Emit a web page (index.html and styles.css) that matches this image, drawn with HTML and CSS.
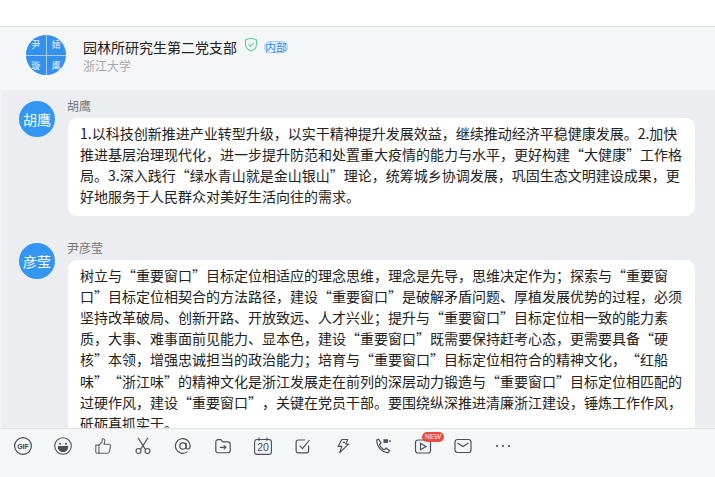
FILE: index.html
```html
<!DOCTYPE html>
<html lang="zh-CN">
<head>
    <meta charset="UTF-8">
    <meta name="viewport" content="width=device-width, initial-scale=1.0">
    <title>园林所研究生第二党支部</title>
    <link rel="stylesheet" href="styles.css">
</head>
<body>
    <div class="topbar"></div>
    <div class="header">
        <div class="group-avatar">
            <span>尹</span><span>婧</span><span>璇</span><span>鹰</span>
        </div>
        <div class="group-info">
            <div class="group-title">
                <span>园林所研究生第二党支部</span>
                <svg class="shield" width="14" height="15" viewBox="0 0 14 15" fill="none" stroke="#5fcf9a" stroke-width="1.1">
                    <path d="M7 1l5.5 2v4.5c0 3-2.5 5.300-5.500 6.500C4 12.800 1.500 10.500 1.500 7.500V3z"/>
                    <path d="M4.500 7.200l2 2 3.200-3.400"/>
                </svg>
                <span class="tag">内部</span>
            </div>
            <div class="group-org">浙江大学</div>
        </div>
    </div>
    <div class="chat">
        <div class="msg">
            <div class="avatar">胡鹰</div>
            <div class="msg-body">
                <div class="name">胡鹰</div>
                <div class="bubble">1.以科技创新推进产业转型升级，以实干精神提升发展效益，继续推动经济平稳健康发展。2.加快推进基层治理现代化，进一步提升防范和处置重大疫情的能力与水平，更好构建“大健康”工作格局。3.深入践行“绿水青山就是金山银山”理论，统筹城乡协调发展，巩固生态文明建设成果，更好地服务于人民群众对美好生活向往的需求。</div>
            </div>
        </div>
        <div class="msg">
            <div class="avatar">彦莹</div>
            <div class="msg-body">
                <div class="name">尹彦莹</div>
                <div class="bubble">树立与“重要窗口”目标定位相适应的理念思维，理念是先导，思维决定作为；探索与“重要窗口”目标定位相契合的方法路径，建设“重要窗口”是破解矛盾问题、厚植发展优势的过程，必须坚持改革破局、创新开路、开放致远、人才兴业；提升与“重要窗口”目标定位相一致的能力素质，大事、难事面前见能力、显本色，建设“重要窗口”既需要保持赶考心态，更需要具备“硬核”本领，增强忠诚担当的政治能力；培育与“重要窗口”目标定位相符合的精神文化，“红船味”“浙江味”的精神文化是浙江发展走在前列的深层动力锻造与“重要窗口”目标定位相匹配的过硬作风，建设“重要窗口”，关键在党员干部。要围绕纵深推进清廉浙江建设，锤炼工作作风，砥砺真抓实干。</div>
            </div>
        </div>
    </div>
    <div class="toolbar">
        <svg width="18" height="18" viewBox="0 0 18 18" fill="none" stroke="#3f444e" stroke-width="1.100"><circle cx="9" cy="9" r="8.400"/><text x="9" y="11.600" class="gif">GIF</text></svg>
        <svg width="18" height="18" viewBox="0 0 18 18" fill="none" stroke="#4a4f5a" stroke-width="1.100"><circle cx="9" cy="9" r="8.300"/><circle cx="6" cy="6.800" r="1" fill="#4a4f5a" stroke="none"/><circle cx="12" cy="6.800" r="1" fill="#4a4f5a" stroke="none"/><path d="M4.300 9.500h9.400c0 3-2.100 5-4.700 5s-4.700-2-4.700-5z" fill="#4a4f5a"/></svg>
        <svg width="18" height="18" viewBox="-1 -1 20 20" fill="none" stroke="#5a5f6a" stroke-width="1.200"><path d="M1 8h3.500v9H2.500A1.500 1.500 0 0 1 1 15.500z"/><path d="M4.500 8l3.500-3.500V2c0-1.500 2.800-1.500 3 .8.100 1.400-.4 2.900-.8 4.200h5.300c1.300 0 2 1 1.800 2.200l-1.100 5.900c-.2 1.100-1 1.900-2.200 1.900H4.500"/></svg>
        <svg width="18" height="18" viewBox="-1 -1 20 20" fill="none" stroke="#4a4f5a" stroke-width="1.200"><path d="M3.500 0l8 12.500M14.500 0l-8 12.500"/><circle cx="4" cy="14.500" r="2.800"/><circle cx="14" cy="14.500" r="2.800"/></svg>
        <svg width="18" height="18" viewBox="-1 -1 20 20" fill="none" stroke="#4a4f5a" stroke-width="1.300"><circle cx="9" cy="9" r="3.500"/><path d="M12.500 5.500v5c0 2.700 4.500 2.700 4.500-1.500a8.200 8.200 0 1 0-3 6.300"/></svg>
        <svg width="18" height="18" viewBox="-1 -1 20 20" fill="none" stroke="#4a4f5a" stroke-width="1.300"><path d="M1 4.500C1 3 2 2 3.500 2h3.200l2 2.500h5.800c1.500 0 2.500 1 2.500 2.500v7c0 1.500-1 2.500-2.500 2.500h-11C2 16.500 1 15.500 1 14z"/><path d="M5.500 10.500h6.500M9.800 8.300l2.400 2.200-2.400 2.200"/></svg>
        <svg width="18" height="18" viewBox="0 0 18 18" fill="none" stroke="#4a4f5a" stroke-width="1.100"><rect x=".6" y="2.500" width="16.800" height="14.900" rx="2.500"/><path d="M5 .5v3.500M13 .5v3.500"/><text x="9" y="14" class="date">20</text></svg>
        <svg width="18" height="18" viewBox="-1.500 -1.500 21 21" fill="none" stroke="#4a4f5a" stroke-width="1.400"><path d="M15.500 8.500v6c0 1.500-1 2.500-2.500 2.500H3.500C2 17 1 16 1 14.500V4.500C1 3 2 2 3.500 2h8"/><path d="M5 8.500l3.500 3.500L16.500 2"/></svg>
        <svg width="18" height="18" viewBox="-2 -1 22 20" fill="none" stroke="#4a4f5a" stroke-width="1.400" stroke-linejoin="round"><path d="M7.500 1H15l-2.800 5.500H16L5 17l2.600-7.500H3z"/><path d="M8.500 4.500h3" /></svg>
        <svg width="18" height="18" viewBox="-1 -1 20 20" fill="none" stroke="#4a4f5a" stroke-width="1.300"><path d="M2 2.500l2.200-1 2.600 4-1.600 1.600c.7 2.600 3 5.100 5.600 6l1.600-1.700 3.800 2.900-1.200 2c-5.800 1-12.800-6-13-13.800z"/><rect x="9.500" y="1.500" width="5" height="4" fill="#4a4f5a" stroke="none"/><path d="M15 3.500l2.500-1.500v3z" fill="#4a4f5a" stroke="none"/></svg>
        <div class="video-btn">
            <svg width="18" height="18" viewBox="0 0 18 18" fill="none" stroke="#4a4f5a" stroke-width="1.200"><rect x="1.500" y="3" width="15" height="13" rx="2.500"/><path d="M6.500 6.300l5.500 3.200-5.500 3.200z"/></svg>
            <span class="badge">NEW</span>
        </div>
        <svg width="18" height="18" viewBox="0 0 18 18" fill="none" stroke="#4a4f5a" stroke-width="1.200"><rect x="1" y="2.500" width="16" height="13" rx="2.500"/><path d="M3.500 6l5.500 3.500L14.500 6"/></svg>
        <svg width="18" height="18" viewBox="0 0 18 18" fill="#4a4f5a"><circle cx="3" cy="9" r="1.100"/><circle cx="9" cy="9" r="1.100"/><circle cx="15" cy="9" r="1.100"/></svg>
    </div>
</body>
</html>
```

FILE: styles.css
```css
body {
    margin: 0;
    display: flex;
    flex-direction: column;
    height: 100vh;
    overflow: hidden;
    font-family: "Noto Sans CJK SC", "Liberation Sans", sans-serif;
    text-spacing-trim: space-all;
    background-color: #f5f6f8;
}
.topbar {
    height: 26px;
    flex-shrink: 0;
    background-color: #fff;
    border-bottom: 1px solid #e3e4e6;
}
.header {
    height: 55px;
    flex-shrink: 0;
    display: flex;
    align-items: flex-start;
    gap: 17px;
    padding: 8px 0 0 26px;
    background-color: #f5f6f8;
}
.group-avatar {
    width: 40px;
    height: 40px;
    border-radius: 50%;
    overflow: hidden;
    display: grid;
    grid-template-columns: 1fr 1fr;
    gap: 1px;
    background-color: #a9cdf2;
}
.group-avatar span {
    display: flex;
    align-items: center;
    justify-content: center;
    background-color: #3390ec;
    color: #e6f1fc;
    font-size: 9px;
}
.group-info {
    display: flex;
    flex-direction: column;
    gap: 1px;
    margin-top: 1px;
}
.group-title {
    display: flex;
    align-items: center;
    height: 21px;
    font-size: 14px;
    color: #222;
}
.shield {
    margin: -4px 0 0 7px;
}
.tag {
    margin-left: 6px;
    width: 22px;
    height: 10px;
    line-height: 10px;
    text-align: center;
    border-radius: 6px;
    font-size: 11px;
    color: #2d8cf0;
    background-color: #e3f0fd;
    border: 1px solid #a9cff5;
}
.group-org {
    font-size: 12px;
    line-height: 16px;
    color: #a8a8a8;
}
.chat {
    flex: 1;
    min-height: 0;
    overflow: hidden;
    padding: 10px 20px 0 17px;
    background-color: #ebedf0;
    border-top: 1px solid #eef0f2;
    border-left: 2px solid #f2f3f5;
}
.msg {
    display: flex;
    gap: 13px;
    margin-bottom: 27px;
}
.avatar {
    width: 36px;
    height: 36px;
    flex-shrink: 0;
    border-radius: 50%;
    background-color: #3396f3;
    color: #fff;
    font-size: 14px;
    line-height: 36px;
    text-align: center;
}
.msg-body {
    flex: 1;
    min-width: 0;
    margin-top: -2px;
}
.name {
    font-size: 12px;
    line-height: 14px;
    color: #777;
    margin: 0 0 5px -1px;
}
.bubble {
    padding: 4.5px 11px 8.700px 12px;
    background-color: #fff;
    border-radius: 9px;
    font-size: 14px;
    line-height: 21.2px;
    color: #222;
}
.toolbar {
    height: 40px;
    flex-shrink: 0;
    display: flex;
    align-items: flex-start;
    gap: 22px;
    padding: 8px 0 0 14px;
    background-color: #f5f6f8;
    border-top: 1px solid #dfe0e3;
}
.toolbar svg {
    display: block;
}
.gif {
    font-family: "Liberation Sans", sans-serif;
    font-size: 7px;
    font-weight: bold;
    fill: #3f444e;
    stroke: none;
    text-anchor: middle;
}
.date {
    font-family: "Liberation Sans", sans-serif;
    font-size: 10.500px;
    fill: #4a4f5a;
    stroke: none;
    text-anchor: middle;
}
.video-btn {
    position: relative;
}
.badge {
    position: absolute;
    top: -5px;
    left: 8px;
    width: 22px;
    height: 10px;
    border-radius: 5px;
    background-color: #e9493f;
    color: #fff;
    font-family: "Liberation Sans", sans-serif;
    font-size: 7px;
    line-height: 10px;
    text-align: center;
}
```
